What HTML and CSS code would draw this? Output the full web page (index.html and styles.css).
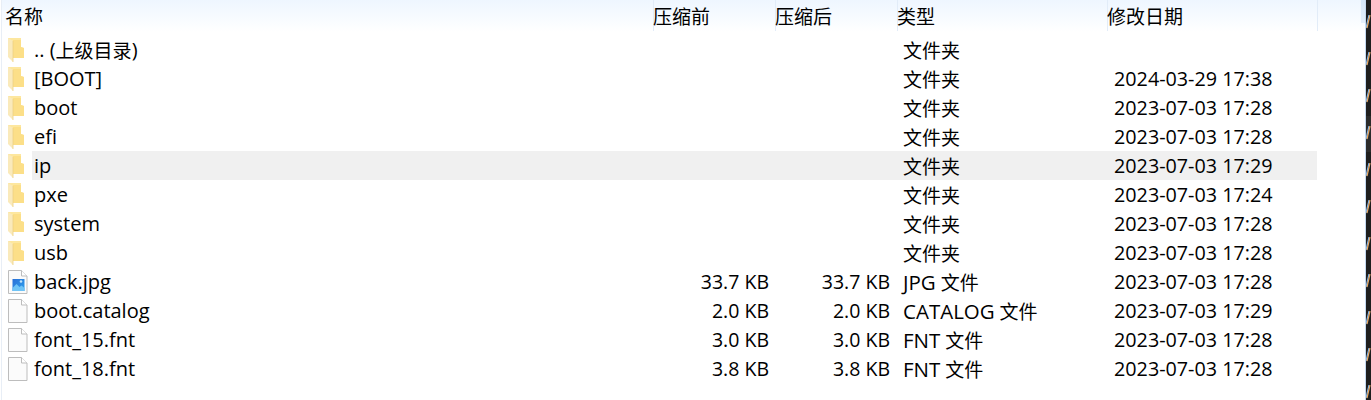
FILE: index.html
```html
<!DOCTYPE html>
<html lang="zh-CN">

<head>
    <meta charset="utf-8" />
    <title>压缩包</title>
    <link rel="stylesheet" href="styles.css">
</head>

<body>
    <svg class="defs" width="0" height="0">
        <symbol id="folder" viewBox="0 0 20 24">
            <path d="M0 0h13v9l3 1v10H5v-1H0z" fill="#fde79f" />
            <path d="M5 2h8v7l3 1v10H5z" fill="#fcdf88" />
            <path d="M0 0l5 3v21l-5-5z" fill="#faeabb" />
            <path d="M5 3v21" stroke="#eed084" stroke-width=".8" />
        </symbol>
        <symbol id="file" viewBox="0 0 20 24">
            <path d="M.5.5h13l5.500 5.500v17.500H.5z" fill="#fbfbfb" stroke="#bdbdbd" />
            <path d="M13.500.5v5.500h5.500" fill="#fff" stroke="#bdbdbd" />
        </symbol>
        <linearGradient id="photo" x1="0" y1="0" x2="1" y2="1">
            <stop offset="0" stop-color="#2a6fd6" />
            <stop offset="1" stop-color="#2fa2ee" />
        </linearGradient>
    </svg>

    <div class="window">
        <div class="list">
            <div class="row head">
                <div class="name">名称</div>
                <div class="packed">压缩前</div>
                <div class="size">压缩后</div>
                <div class="type">类型</div>
                <div class="date">修改日期</div>
                <div class="spare"></div>
            </div>

            <div class="row">
                <div class="name"><svg class="icon"><use href="#folder" /></svg>.. (<span class="zh">上级目录</span>)</div>
                <div class="packed"></div>
                <div class="size"></div>
                <div class="type">文件夹</div>
                <div class="date"></div>
            </div>
            <div class="row">
                <div class="name"><svg class="icon"><use href="#folder" /></svg>[BOOT]</div>
                <div class="packed"></div>
                <div class="size"></div>
                <div class="type">文件夹</div>
                <div class="date">2024-03-29 17:38</div>
            </div>
            <div class="row">
                <div class="name"><svg class="icon"><use href="#folder" /></svg>boot</div>
                <div class="packed"></div>
                <div class="size"></div>
                <div class="type">文件夹</div>
                <div class="date">2023-07-03 17:28</div>
            </div>
            <div class="row">
                <div class="name"><svg class="icon"><use href="#folder" /></svg>efi</div>
                <div class="packed"></div>
                <div class="size"></div>
                <div class="type">文件夹</div>
                <div class="date">2023-07-03 17:28</div>
            </div>
            <div class="row hover">
                <div class="name"><svg class="icon"><use href="#folder" /></svg>ip</div>
                <div class="packed"></div>
                <div class="size"></div>
                <div class="type">文件夹</div>
                <div class="date">2023-07-03 17:29</div>
            </div>
            <div class="row">
                <div class="name"><svg class="icon"><use href="#folder" /></svg>pxe</div>
                <div class="packed"></div>
                <div class="size"></div>
                <div class="type">文件夹</div>
                <div class="date">2023-07-03 17:24</div>
            </div>
            <div class="row">
                <div class="name"><svg class="icon"><use href="#folder" /></svg>system</div>
                <div class="packed"></div>
                <div class="size"></div>
                <div class="type">文件夹</div>
                <div class="date">2023-07-03 17:28</div>
            </div>
            <div class="row">
                <div class="name"><svg class="icon"><use href="#folder" /></svg>usb</div>
                <div class="packed"></div>
                <div class="size"></div>
                <div class="type">文件夹</div>
                <div class="date">2023-07-03 17:28</div>
            </div>
            <div class="row">
                <div class="name">
                    <svg class="icon" viewBox="0 0 20 24">
                        <use href="#file" />
                        <rect x="4.500" y="9" width="12" height="12" fill="url(#photo)" />
                        <path d="M4.500 21v-3l4-4 3 3 2-1.500 3 2.500v3z" fill="#6fc4f6" />
                        <circle cx="13" cy="11.500" r="1.300" fill="#bfe4fb" />
                    </svg>back.jpg
                </div>
                <div class="packed">33.7 KB</div>
                <div class="size">33.7 KB</div>
                <div class="type"><span class="en">JPG</span> 文件</div>
                <div class="date">2023-07-03 17:28</div>
            </div>
            <div class="row">
                <div class="name"><svg class="icon"><use href="#file" /></svg>boot.catalog</div>
                <div class="packed">2.0 KB</div>
                <div class="size">2.0 KB</div>
                <div class="type"><span class="en">CATALOG</span> 文件</div>
                <div class="date">2023-07-03 17:29</div>
            </div>
            <div class="row">
                <div class="name"><svg class="icon"><use href="#file" /></svg>font_15.fnt</div>
                <div class="packed">3.0 KB</div>
                <div class="size">3.0 KB</div>
                <div class="type"><span class="en">FNT</span> 文件</div>
                <div class="date">2023-07-03 17:28</div>
            </div>
            <div class="row">
                <div class="name"><svg class="icon"><use href="#file" /></svg>font_18.fnt</div>
                <div class="packed">3.8 KB</div>
                <div class="size">3.8 KB</div>
                <div class="type"><span class="en">FNT</span> 文件</div>
                <div class="date">2023-07-03 17:28</div>
            </div>
        </div>

        <!-- sliver of the dark window behind -->
        <svg class="edge" width="6" height="400">
            <defs>
                <pattern id="slash" width="6" height="37" y="15" patternUnits="userSpaceOnUse">
                    <path d="M1 13L4 0" stroke="#7fb4ea" stroke-width="1.200" fill="none" />
                    <path d="M2 13L5 0" stroke="#eaa860" stroke-width="1.200" fill="none" />
                </pattern>
            </defs>
            <rect x="1" width="5" height="400" fill="#1e1e1e" />
            <rect x="1" y="116" width="5" height="36" fill="#2b2b2b" />
            <rect x="1" width="5" height="400" fill="url(#slash)" />
            <rect width="1" height="400" fill="#c5d9f0" />
        </svg>
    </div>
</body>

</html>
```

FILE: styles.css
```css
* {
    box-sizing: border-box;
}

body {
    margin: 0;
    background: #fff;
    color: #000;
    font-family: "Open Sans", "Noto Sans CJK SC", sans-serif;
    font-size: 20px;
}

.defs {
    display: block;
    height: 0;
}

.window {
    display: flex;
    height: 400px;
    overflow: hidden;
}

.list {
    width: 1364px;
    margin-left: 1px;
    border-left: 1px solid #e8eef6;
}

.row {
    display: grid;
    grid-template-columns: 651px 122px 122px 210px 210px;
    width: 1315px;
    height: 29px;
    align-items: center;
}

.row.head {
    grid-template-columns: 651px 122px 122px 210px 210px 1fr;
    width: auto;
    height: 35px;
    align-items: start;
    background: linear-gradient(#d6e7fa, #e6f0fb) right top / 4px 23px no-repeat, linear-gradient(#eef6ff, #fff 92%);
}

.row.hover {
    background: linear-gradient(to right, transparent 30px, #f0f0f0 30px);
}

.name {
    display: flex;
    align-items: center;
    padding-left: 6px;
    white-space: nowrap;
}

.zh {
    font-size: 19px;
}

.icon {
    width: 20px;
    height: 24px;
    margin-right: 6px;
    flex: none;
}

.packed,
.size {
    font-size: 19.5px;
    text-align: right;
    padding-right: 6px;
}

.size {
    padding-right: 7px;
}

.type {
    font-size: 19px;
    padding-left: 6px;
}

.en {
    font-size: 20.5px;
}

.date {
    font-size: 19.75px;
    padding-left: 7px;
}

.head .name,
.head .packed,
.head .size,
.head .type,
.head .date,
.head .spare {
    height: 31px;
    padding: 3px 0 0;
    font-size: 19px;
    line-height: 28px;
    text-align: left;
    box-shadow: inset 1px 0 0 #e2ecf8;
}

.head .name {
    align-items: flex-start;
    padding-left: 3px;
    box-shadow: none;
}

.edge {
    display: block;
    flex: none;
}
```
